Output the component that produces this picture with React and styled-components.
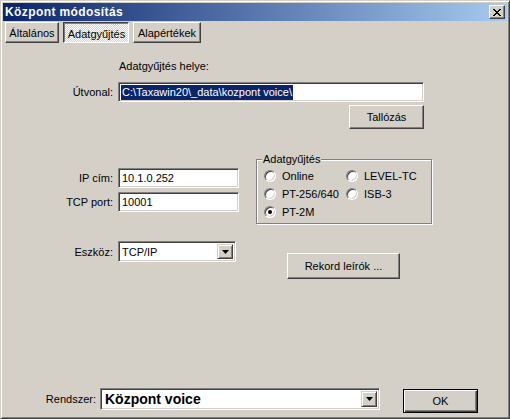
import React from 'react';
import styled, { createGlobalStyle } from 'styled-components';

const Global = createGlobalStyle`
  html, body { margin: 0; padding: 0; background: #d4d0c8; }
  body { font-family: "Liberation Sans", Arial, sans-serif; font-size: 11px; color: #000; }
  * { box-sizing: border-box; }
`;

const Window = styled.div`
  width: 510px;
  height: 419px;
  background: #d4d0c8;
  border: 1px solid;
  border-color: #d4d0c8 #404040 #404040 #d4d0c8;
  box-shadow: inset 1px 1px #fff, inset -1px -1px #808080;
  padding: 2px;
  display: flex;
  flex-direction: column;
`;

const TitleBar = styled.div`
  height: 18px;
  flex: none;
  display: flex;
  align-items: center;
  justify-content: space-between;
  padding: 0 2px 0 2px;
  background: linear-gradient(to right, #0a246a, #a6caf0);
  color: #fff;
  font-weight: bold;
  font-size: 12px;
`;

const TitleText = styled.span`
  letter-spacing: 0.4px;
`;

const CloseButton = styled.div`
  width: 16px;
  height: 14px;
  background: #d4d0c8;
  border: 1px solid;
  border-color: #fff #404040 #404040 #fff;
  box-shadow: inset -1px -1px #808080;
  display: flex;
  align-items: center;
  justify-content: center;
`;

const TabRow = styled.div`
  display: flex;
  gap: 4px;
  padding-left: 2px;
  margin-top: 1px;
  flex: none;
`;

const Tab = styled.div`
  width: ${p => p.$w}px;
  height: 21px;
  display: flex;
  align-items: center;
  justify-content: center;
  border: 1px solid;
  ${p => p.$pressed ? `
    border-color: #404040 #fff #fff #404040;
    box-shadow: inset 1px 1px #808080;
    background: repeating-conic-gradient(#fff 0 25%, #d4d0c8 0 50%) 0 0 / 2px 2px;
    padding: 2px 0 0 1px;
  ` : `
    border-color: #fff #404040 #404040 #fff;
    box-shadow: inset -1px -1px #808080;
    background: #d4d0c8;
  `}
`;

const Content = styled.div`
  flex: 1;
  display: flex;
  flex-direction: column;
`;

const PathSection = styled.div`
  display: grid;
  grid-template-columns: 110px 306px;
  column-gap: 5px;
  margin-top: 17px;
  align-items: center;
`;

const Caption = styled.div`
  grid-column: 2;
  line-height: 13px;
  height: 13px;
  margin-bottom: 9px;
  padding-left: 1px;
`;

const Label = styled.div`
  text-align: right;
  white-space: nowrap;
`;

const Field = styled.div`
  height: ${p => p.$h || 20}px;
  background: #fff;
  border: 1px solid;
  border-color: #808080 #fff #fff #808080;
  box-shadow: inset 1px 1px #404040, inset -1px -1px #d4d0c8;
  display: flex;
  align-items: center;
  padding-left: ${p => p.$pad ?? 3}px;
  white-space: nowrap;
  overflow: hidden;
`;

const Selected = styled.span`
  background: #0a246a;
  color: #fff;
  line-height: 15px;
  padding: 0 1px 0 1px;
`;

const Button = styled.div`
  width: ${p => p.$w}px;
  height: ${p => p.$h}px;
  display: flex;
  align-items: center;
  justify-content: center;
  background: #d4d0c8;
  border: 1px solid;
  border-color: ${p => p.$default ? '#000' : '#fff #404040 #404040 #fff'};
  box-shadow: ${p => p.$default
    ? 'inset 1px 1px #fff, inset -1px -1px #404040, inset -2px -2px #808080'
    : 'inset -1px -1px #808080'};
  flex: none;
`;

const BrowseButton = styled(Button)`
  grid-column: 2;
  justify-self: end;
  margin-top: 3px;
`;

const Middle = styled.div`
  display: flex;
  align-items: flex-start;
  margin-top: 30px;
`;

const FieldGrid = styled.div`
  display: grid;
  grid-template-columns: 110px ${p => p.$w}px;
  column-gap: 5px;
  row-gap: 4px;
  align-items: center;
  margin-top: ${p => p.$mt || 0}px;
`;

const GroupBox = styled.div`
  position: relative;
  width: 176px;
  height: 65px;
  margin-left: 17px;
  border: 1px solid #808080;
  box-shadow: 1px 1px 0 #fff, inset 1px 1px 0 #fff;
  padding: 7px 0 0 7px;
  display: grid;
  grid-template-columns: 82px 80px;
  grid-auto-rows: 18px;
  align-content: start;
`;

const Legend = styled.span`
  position: absolute;
  top: -7px;
  left: 5px;
  padding: 0 1px;
  line-height: 13px;
  background: #d4d0c8;
`;

const Radio = styled.div`
  display: flex;
  align-items: center;
  gap: 6px;
  height: 18px;
  white-space: nowrap;
`;

const Circle = styled.span`
  width: 12px;
  height: 12px;
  flex: none;
  border-radius: 50%;
  background: #fff;
  border: 1px solid;
  border-color: #808080 #fff #fff #808080;
  box-shadow: inset 1px 1px #404040, inset -1px -1px #d4d0c8;
  display: flex;
  align-items: center;
  justify-content: center;
  &::after {
    content: '';
    display: ${p => p.$checked ? 'block' : 'none'};
    width: 4px;
    height: 4px;
    border-radius: 50%;
    background: #000;
  }
`;

const DeviceRow = styled.div`
  display: flex;
  align-items: flex-start;
  margin-top: 17px;
`;

const RecordButton = styled(Button)`
  margin-left: 51px;
  margin-top: 12px;
`;

const ComboBox = styled.div`
  width: ${p => p.$w}px;
  height: ${p => p.$h}px;
  background: #fff;
  border: 1px solid;
  border-color: #808080 #fff #fff #808080;
  box-shadow: inset 1px 1px #404040, inset -1px -1px #d4d0c8;
  padding: 2px;
  display: flex;
  align-items: center;
  flex: none;
`;

const ComboText = styled.div`
  flex: 1;
  padding-left: ${p => p.$big ? 2 : 1}px;
  font-weight: ${p => p.$big ? 'bold' : 'normal'};
  font-size: ${p => p.$big ? 14 : 11}px;
  white-space: nowrap;
`;

const DropButton = styled.div`
  width: 16px;
  height: 100%;
  background: #d4d0c8;
  border: 1px solid;
  border-color: #d4d0c8 #404040 #404040 #d4d0c8;
  box-shadow: inset 1px 1px #fff, inset -1px -1px #808080;
  display: flex;
  align-items: center;
  justify-content: center;
`;

const BottomRow = styled.div`
  margin-top: auto;
  display: flex;
  align-items: flex-start;
  padding-bottom: 3px;
`;

const BottomLabel = styled.div`
  width: 93px;
  text-align: right;
  line-height: 22px;
  margin-right: 4px;
`;

const OkButton = styled(Button)`
  margin-left: 23px;
  margin-top: 1px;
`;

const Arrow = () => (
  <svg width="7" height="4" viewBox="0 0 7 4">
    <path d="M0 0h7L3.5 4z" fill="#000" />
  </svg>
);

const CloseX = () => (
  <svg width="8" height="7" viewBox="0 0 8 7" shapeRendering="crispEdges">
    <path d="M0 0h2v1h-2zM6 0h2v1h-2zM1 1h2v1h-2zM5 1h2v1h-2zM2 2h4v1h-4zM3 3h2v1h-2zM2 4h4v1h-4zM1 5h2v1h-2zM5 5h2v1h-2zM0 6h2v1h-2zM6 6h2v1h-2z" fill="#000" />
  </svg>
);

const Combo = ({ w, h, big, children }) => (
  <ComboBox $w={w} $h={h}>
    <ComboText $big={big}>{children}</ComboText>
    <DropButton><Arrow /></DropButton>
  </ComboBox>
);

export default function App() {
  return (
    <>
      <Global />
      <Window>
        <TitleBar>
          <TitleText>Központ módosítás</TitleText>
          <CloseButton><CloseX /></CloseButton>
        </TitleBar>
        <TabRow>
          <Tab $w={54}>Általános</Tab>
          <Tab $w={66} $pressed>Adatgyűjtés</Tab>
          <Tab $w={68}>Alapértékek</Tab>
        </TabRow>
        <Content>
          <PathSection>
            <Caption>Adatgyűjtés helye:</Caption>
            <Label>Útvonal:</Label>
            <Field $pad={2}><Selected>C:\Taxawin20\_data\kozpont voice\</Selected></Field>
            <BrowseButton $w={75} $h={24}>Tallózás</BrowseButton>
          </PathSection>
          <Middle>
            <FieldGrid $w={121} $mt={9}>
              <Label>IP cím:</Label>
              <Field>10.1.0.252</Field>
              <Label>TCP port:</Label>
              <Field>10001</Field>
            </FieldGrid>
            <GroupBox>
              <Legend>Adatgyűjtés</Legend>
              <Radio><Circle />Online</Radio>
              <Radio><Circle />LEVEL-TC</Radio>
              <Radio><Circle />PT-256/640</Radio>
              <Radio><Circle />ISB-3</Radio>
              <Radio><Circle $checked />PT-2M</Radio>
            </GroupBox>
          </Middle>
          <DeviceRow>
            <FieldGrid $w={118}>
              <Label>Eszköz:</Label>
              <Combo w={118} h={21}>TCP/IP</Combo>
            </FieldGrid>
            <RecordButton $w={113} $h={26}>Rekord leírók ...</RecordButton>
          </DeviceRow>
          <BottomRow>
            <BottomLabel>Rendszer:</BottomLabel>
            <Combo w={280} h={22} big>Központ voice</Combo>
            <OkButton $w={75} $h={24} $default>OK</OkButton>
          </BottomRow>
        </Content>
      </Window>
    </>
  );
}
